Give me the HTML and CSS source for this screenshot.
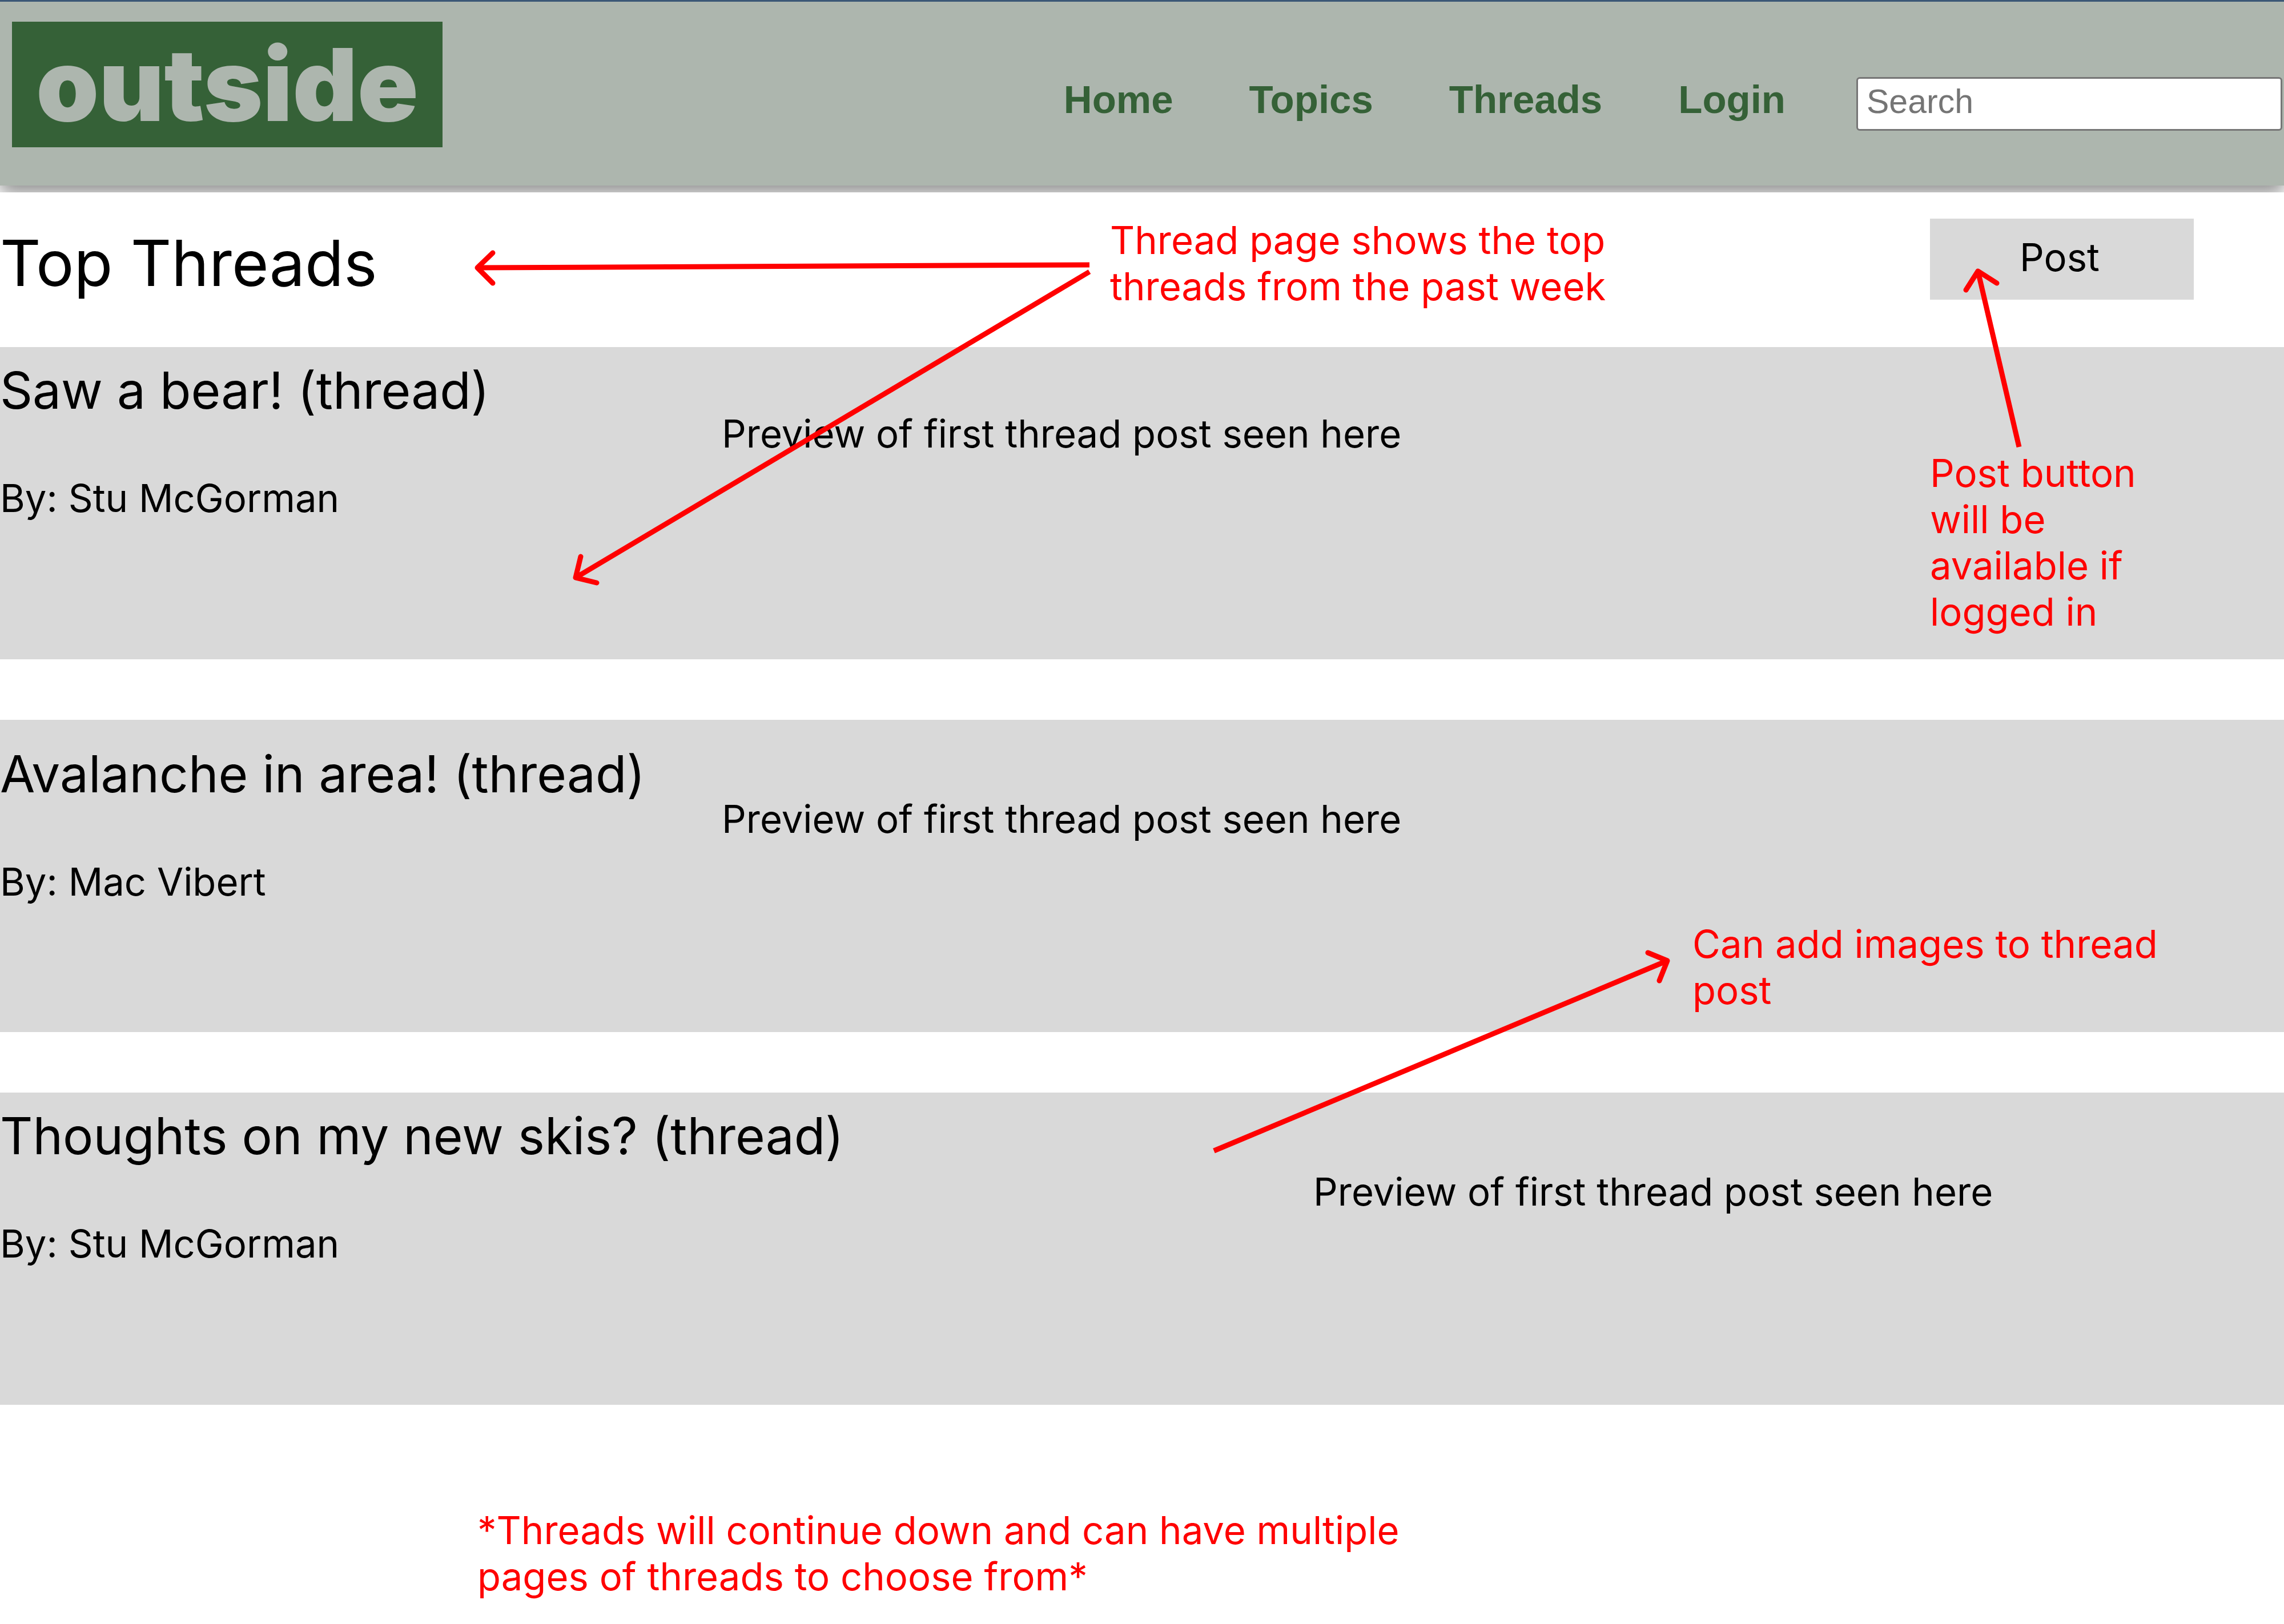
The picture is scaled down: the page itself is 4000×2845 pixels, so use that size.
FILE: index.html
```html
<!DOCTYPE html>
<html lang="en">
<head>
  <meta charset="utf-8">
  <title>outside – Top Threads</title>
  <link rel="stylesheet" href="styles.css">
</head>
<body>
  <div class="page">
    <div class="header-wrap">
      <header class="header">
        <a class="logo" href="#">outside</a>
        <div class="header-tools">
          <nav class="nav" aria-label="Main">
            <a href="#">Home</a>
            <a href="#">Topics</a>
            <a href="#">Threads</a>
            <a href="#">Login</a>
          </nav>
          <input class="search" type="search" placeholder="Search" aria-label="Search">
        </div>
      </header>
    </div>

    <main>
      <div class="heading">
        <h1>Top Threads</h1>
        <p class="note note-top">Thread page shows the top threads from the past week</p>
        <button class="post-button" type="button">Post</button>
      </div>

      <div class="threads">
        <article class="thread">
          <div class="thread-info">
            <h2>Saw a bear! (thread)</h2>
            <p>By: Stu McGorman</p>
          </div>
          <p class="preview">Preview of first thread post seen here</p>
          <p class="note note-post">Post button will be available if logged in</p>
        </article>

        <article class="thread thread-second">
          <div class="thread-info">
            <h2>Avalanche in area! (thread)</h2>
            <p>By: Mac Vibert</p>
          </div>
          <p class="preview">Preview of first thread post seen here</p>
          <p class="note note-images">Can add images to thread post</p>
        </article>

        <article class="thread thread-third">
          <div class="thread-info">
            <h2>Thoughts on my new skis? (thread)</h2>
            <p>By: Stu McGorman</p>
          </div>
          <p class="preview">Preview of first thread post seen here</p>
        </article>
      </div>

      <p class="note note-more">*Threads will continue down and can have multiple pages of threads to choose from*</p>
    </main>

    <svg class="arrows" viewBox="0 0 4000 2845" preserveAspectRatio="xMinYMin meet" aria-hidden="true">
      <path d="M1908 464L837 469"/>
      <path class="head" d="M863 443L836 469L863 496"/>
      <path d="M1908 476L1008 1012"/>
      <path class="head" d="M1017 975L1008 1012L1045 1021"/>
      <path d="M3536 783L3464 475"/>
      <path class="head" d="M3443 508L3464 475L3497 496"/>
      <path d="M2126 2016L2920 1683"/>
      <path class="head" d="M2886 1669L2920 1683L2906 1718"/>
    </svg>
  </div>
</body>
</html>
```

FILE: styles.css
```css
* {
  box-sizing: border-box;
}

body,
h1,
h2,
p {
  margin: 0;
}

body {
  background: #fff;
  color: #000;
  font-family: Inter, sans-serif;
  font-size: 67px;
  line-height: 81px;
}

h1,
h2 {
  font-weight: 400;
}

.page {
  position: relative;
  min-height: 100vh;
}

/* Header */
.header-wrap {
  overflow: hidden;
  padding-bottom: 12px;
  border-top: 3px solid #3b5876;
}

.header {
  display: flex;
  justify-content: space-between;
  align-items: flex-start;
  padding: 35px 3px 67px 21px;
  background: #adb6ae;
  box-shadow: 0 14px 30px rgba(0, 0, 0, 0.44);
}

.logo {
  width: 754px;
  background: #356137;
  color: #adb6ae;
  font-size: 176px;
  font-weight: 900;
  line-height: 220px;
  text-align: center;
  text-decoration: none;
}

.header-tools {
  display: flex;
  align-items: flex-start;
  gap: 124px;
  margin-top: 97px;
}

.nav {
  display: flex;
  gap: 133px;
  font: bold 69px/80px "Liberation Sans", Arial, sans-serif;
}

.nav a {
  color: #356137;
  text-decoration: none;
}

.search {
  appearance: none;
  width: 746px;
  height: 94px;
  padding: 0 15px 8px;
  border: 3px solid #767676;
  border-radius: 6px;
  background: #fff;
  font: 59px/80px "Liberation Sans", Arial, sans-serif;
}

.search::placeholder {
  color: #757575;
}

/* Page heading */
.heading {
  display: grid;
  grid-template-columns: 48.6vw 1fr 462px;
  align-items: center;
  padding: 43px 158px 66px 0;
}

h1 {
  font-size: 111px;
  line-height: 134px;
}

.post-button {
  height: 142px;
  margin-bottom: 14px;
  padding: 0 8px 8px 0;
  border: 0;
  background: #d9d9d9;
  color: #000;
  font: inherit;
}

/* Thread cards */
.threads {
  display: grid;
  gap: 106px;
}

.thread {
  position: relative;
  display: grid;
  grid-template-columns: 31.6% 1fr;
  align-items: start;
  min-height: 547px;
  background: #d9d9d9;
}

.thread-info {
  display: grid;
  gap: 94px;
  padding-top: 22px;
}

.thread-second .thread-info {
  padding-top: 41px;
}

.thread-third {
  grid-template-columns: 57.5% 1fr;
}

h2 {
  font-size: 89px;
  line-height: 108px;
}

.preview {
  padding-top: 111px;
}

.thread-second .preview,
.thread-third .preview {
  padding-top: 133px;
}

/* Red annotations */
.note {
  color: #f00;
}

.note-top {
  max-width: 960px;
}

.note-post {
  position: absolute;
  top: 180px;
  left: 84.5%;
  width: 400px;
}

.note-images {
  position: absolute;
  top: 352px;
  left: 74.1%;
  width: 900px;
}

.note-more {
  max-width: 1700px;
  margin: 179px 0 43px 20.9vw;
}

.arrows {
  position: absolute;
  top: 0;
  left: 0;
  width: 100%;
  height: 100%;
  fill: none;
  stroke: #f00;
  stroke-width: 9;
  pointer-events: none;
}

.arrows .head {
  stroke-linecap: round;
  stroke-linejoin: round;
}
```
